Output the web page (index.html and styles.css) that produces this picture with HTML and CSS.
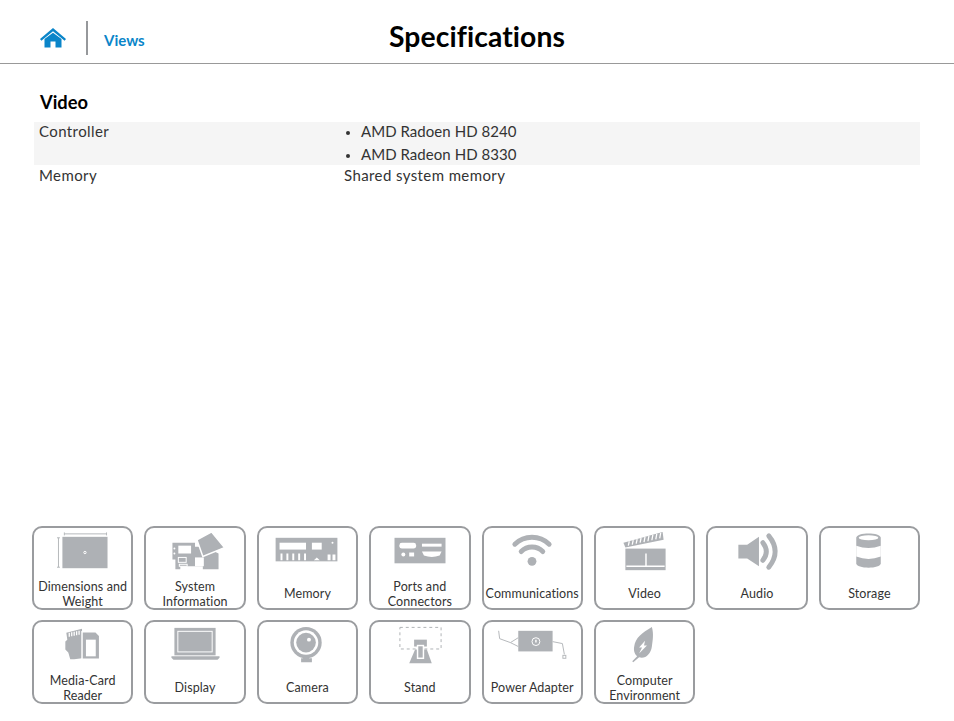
FILE: index.html
```html
<!DOCTYPE html>
<html lang="en">
<head>
<meta charset="utf-8">
<title>Specifications</title>
<link rel="stylesheet" href="styles.css">
</head>
<body>
<div class="page">
  <header class="top">
    <nav class="crumbs">
      <a class="home" href="#" aria-label="Home">
        <svg width="26" height="20" viewBox="0 0 26 20"><path class="blue" d="M13 0 L26 11 L24.6 12.8 L13 3.2 L1.4 12.8 L0 11 Z"/><path class="blue" d="M4.5 11 L13 4.8 L21.5 11 V19.5 H15.5 V13.5 H10.5 V19.5 H4.5 Z"/></svg>
      </a>
      <a class="views" href="#">Views</a>
    </nav>
    <h1 class="title">Specifications</h1>
    <div></div>
  </header>
  <main class="content">
    <h2 class="section">Video</h2>
    <div class="specs">
      <div class="row shaded">
        <div class="key">Controller</div>
        <ul class="val list"><li>AMD Radoen HD 8240</li><li>AMD Radeon HD 8330</li></ul>
      </div>
      <div class="row">
        <div class="key">Memory</div>
        <div class="val">Shared system memory</div>
      </div>
    </div>
  </main>
  <section class="tiles">
    <a class="tile" href="#">
      <svg class="ic" viewBox="0 0 100 52"><rect class="g" x="29" y="9" width="46" height="32"/><path class="ln" d="M31 6H74M31 4.500V7.500M74 4.500V7.500M25 10V40M23.500 10H26.500M23.500 40H26.500"/><circle class="wl" cx="52" cy="25" r="1.200"/></svg>
      <span class="lbl">Dimensions and Weight</span>
    </a>
    <a class="tile" href="#">
      <svg class="ic" viewBox="0 0 100 52"><path class="g" d="M27 15H50V19H60L74 26V42H58V39H35V42H30V32H27Z"/><rect class="w" x="33" y="18" width="13" height="8"/><rect class="wo" x="33" y="30" width="8" height="5"/><rect class="wo" x="34" y="37" width="8" height="2"/><rect class="w" x="50" y="30" width="9" height="9"/><path class="g wstroke" d="M52 12L67 4L80 20L58 29Z"/><circle class="w" cx="29" cy="21" r="1"/><circle class="w" cx="29" cy="26" r="1"/></svg>
      <span class="lbl">System Information</span>
    </a>
    <a class="tile" href="#">
      <svg class="ic" viewBox="0 0 100 52"><rect class="g" x="18" y="10" width="63" height="24"/><rect class="w" x="22" y="15" width="27" height="7"/><rect class="w" x="55" y="15" width="10" height="7"/><circle class="w" cx="76" cy="15" r="1"/><path class="w" d="M23 26h2v7h-2zM29 26h2v7h-2zM35 26h2v7h-2zM41 26h2v7h-2zM47 26h2v7h-2zM71 27h3v6h-3zM76 27h3v6h-3zM57 33l3-3 3 3z"/></svg>
      <span class="lbl one">Memory</span>
    </a>
    <a class="tile" href="#">
      <svg class="ic" viewBox="0 0 100 52"><rect class="g" x="24" y="10" width="52" height="26"/><rect class="w" x="29" y="15" width="17" height="6" rx="2.500"/><rect class="w" x="52" y="16" width="20" height="3"/><circle class="w" cx="33" cy="27" r="2"/><rect class="w" x="39" y="25" width="5" height="4"/><path class="w" d="M52 24H72L70 28Q62 31 54 28Z"/></svg>
      <span class="lbl">Ports and Connectors</span>
    </a>
    <a class="tile" href="#">
      <svg class="ic" viewBox="0 0 100 52"><circle class="g" cx="50" cy="34" r="4.500"/><path class="arc" d="M32.500 16.500A25 25 0 0 1 67.500 16.500"/><path class="arc" d="M39 24A15.500 15.500 0 0 1 61 24"/></svg>
      <span class="lbl one">Communications</span>
    </a>
    <a class="tile" href="#">
      <svg class="ic" viewBox="0 0 100 52"><rect class="g" x="30" y="21" width="41" height="22"/><path class="g" d="M28 15L68 4L69 12L30 20Z"/><path class="stripes" d="M34 13.500L33 18M38 12.400L37 17M42 11.300L41 16M46 10.200L45 15M50 9L49 14.500M54 8L53 13.500M58 7L57 12.500M62 6L61 11.500M66 5L65 10.500"/><path class="wline" d="M31 39H70M51 26V39"/></svg>
      <span class="lbl one">Video</span>
    </a>
    <a class="tile" href="#">
      <svg class="ic" viewBox="0 0 100 52"><path class="g" d="M31 17H40L52 9V39L40 31H31Z"/><path class="arc" d="M56 15Q63 24 56 33"/><path class="arc" d="M62 8Q75 24 62 40"/></svg>
      <span class="lbl one">Audio</span>
    </a>
    <a class="tile" href="#">
      <svg class="ic" viewBox="0 0 100 52"><path class="g" d="M37 10C37 4 62 4 62 10V36C62 42 37 42 37 36Z"/><ellipse class="w" cx="49.500" cy="10" rx="10" ry="2.500"/><path class="w" d="M37 18Q49.500 23 62 18V29Q49.500 34 37 29Z"/></svg>
      <span class="lbl one">Storage</span>
    </a>
    <a class="tile" href="#">
      <svg class="ic" viewBox="0 0 100 52"><path class="g" d="M33 11L49 7V37L41 38H37L35 31L32 28V20L34 18Z"/><path class="stripes" d="M36 11V15M38.500 10.500V14.500M41 10V14M43.500 9.500V13.500M46 9V13"/><path class="g wstroke" d="M49 10H63L67 14V38H49Z"/><rect class="w" x="53" y="18" width="10" height="17"/></svg>
      <span class="lbl">Media-Card Reader</span>
    </a>
    <a class="tile" href="#">
      <svg class="ic" viewBox="0 0 100 52"><rect class="g" x="29" y="6" width="42" height="28"/><rect class="frame" x="32.500" y="9.500" width="35" height="21"/><path class="g" d="M26 35H75V36.500L73 38.500H28L26 36.500Z"/></svg>
      <span class="lbl one">Display</span>
    </a>
    <a class="tile" href="#">
      <svg class="ic" viewBox="0 0 100 52"><circle class="g" cx="49" cy="21" r="16"/><circle class="w" cx="49" cy="21" r="12.500"/><circle class="g" cx="49" cy="21" r="10"/><circle class="w" cx="52" cy="18" r="2"/><path class="g" d="M46 36H52V37H55V41H44V37H46Z"/></svg>
      <span class="lbl one">Camera</span>
    </a>
    <a class="tile" href="#">
      <svg class="ic" viewBox="0 0 100 52"><rect class="dash" x="29.500" y="5.500" width="42" height="22"/><path class="g" d="M39 42L45 28H57L62 42Z"/><rect class="g" x="44" y="18" width="13" height="7"/><rect class="g wstroke" x="47.500" y="24" width="6" height="13"/></svg>
      <span class="lbl one">Stand</span>
    </a>
    <a class="tile" href="#">
      <svg class="ic" viewBox="0 0 100 52"><rect class="g" x="36" y="9" width="35" height="21"/><circle class="wl" cx="54" cy="20" r="4"/><path class="wline" d="M54 18V21"/><path class="ln" d="M16 9L17 17L28 21L36 16M28 21L36 25M71 20L81 22L83 33"/><rect class="ln" x="81.500" y="34" width="3" height="3"/></svg>
      <span class="lbl one">Power Adapter</span>
    </a>
    <a class="tile" href="#">
      <svg class="ic" viewBox="0 0 100 52"><path class="g" d="M57 5C47 11 40 16 39 25C38 30 40 33 42 35L37 40L38 41L44 36C50 38 56 33 57 25C58 18 59 12 57 5Z"/><path class="w" d="M50 19L44 26H47L44 32L52 24H49Z"/></svg>
      <span class="lbl">Computer Environment</span>
    </a>
  </section>
</div>
</body>
</html>
```
FILE: styles.css
```css
* { box-sizing: border-box; }
html, body { margin: 0; padding: 0; background: #fff; }
body { font-family: "Lato", "Open Sans", sans-serif; font-weight: 400; color: #333; }
a { color: inherit; text-decoration: none; }

.page { height: 721px; display: flex; flex-direction: column; overflow: hidden; }

.top {
  height: 64px;
  border-bottom: 1px solid #999;
  display: grid;
  grid-template-columns: 1fr auto 1fr;
  align-items: center;
  flex: none;
}
.crumbs { display: flex; align-items: center; padding: 13px 0 0 40px; }
.home { display: flex; width: 48px; height: 34px; padding-top: 7px; border-right: 2px solid #96989b; }
.views { color: #0a85c9; font-size: 15px; font-weight: 700; margin-left: 16px; margin-top: 4px; }
.blue { fill: #0a85c9; }
.title { margin: 0; font-size: 28.300px; font-weight: 700; color: #000; letter-spacing: 0.1px; padding-top: 8px; }

.content { padding: 28px 34px 0; flex: 1; }
.section { margin: 0 0 0 6px; font-size: 18.300px; font-weight: 700; color: #000; line-height: 20px; }
.specs { margin-top: 10px; font-size: 15px; width: 886px; letter-spacing: 0.4px; }
.row { display: grid; grid-template-columns: 305px 1fr; padding-left: 5px; height: 22px; line-height: 20px; }
.row.shaded { background: #f5f5f5; height: 43px; line-height: 19px; }
.key, .val { min-width: 0; }
.list { margin: 0; padding: 0 0 0 17px; letter-spacing: 0.05px; }
.list li { height: 23px; }
.list li::marker { font-size: 13px; }

.tiles {
  display: grid;
  grid-template-columns: repeat(8, 101.400px);
  column-gap: 11px;
  row-gap: 10px;
  padding: 0 0 17px 32px;
  flex: none;
}
.tile {
  height: 84px;
  border: 2px solid #9a9c9f;
  border-radius: 10px;
  display: flex;
  flex-direction: column;
  align-items: center;
}
.ic { width: 100px; height: 51px; flex: none; display: block; }
.lbl {
  flex: 1;
  display: flex;
  align-items: center;
  justify-content: center;
  text-align: center;
  font-size: 12.500px;
  line-height: 15px;
  padding: 0 2px 4px;
  letter-spacing: 0.1px;
}
.lbl.one { padding-bottom: 1px; }

.g { fill: #aeb1b5; }
.w { fill: #fff; }
.wo { fill: none; stroke: #fff; stroke-width: 1; }
.wstroke { stroke: #fff; stroke-width: 1.500; }
.ln { fill: none; stroke: #b5b8bb; stroke-width: 1; }
.wl { fill: none; stroke: #fff; stroke-width: 1; }
.wline { fill: none; stroke: #fff; stroke-width: 1.500; }
.arc { fill: none; stroke: #aeb1b5; stroke-width: 5; stroke-linecap: round; }
.stripes { fill: none; stroke: #fff; stroke-width: 1.300; }
.frame { fill: #aeb1b5; stroke: #fff; stroke-width: 1; }
.dash { fill: none; stroke: #aeb1b5; stroke-width: 1; stroke-dasharray: 3 3; }
```
